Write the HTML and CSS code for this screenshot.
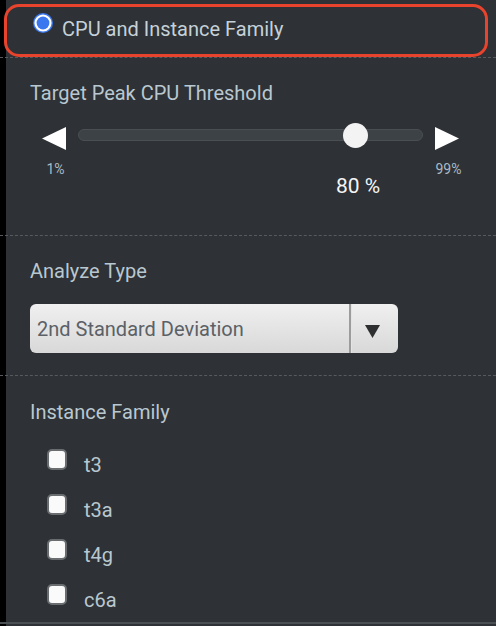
FILE: index.html
```html
<!DOCTYPE html>
<html>
<head>
<meta charset="utf-8">
<link rel="stylesheet" href="styles.css">
</head>
<body>
<div class="panel">
  <div class="header">
    <div class="highlight">
      <svg class="radio" width="20" height="20" viewBox="0 0 20 20">
        <circle cx="10" cy="10" r="10" fill="#3b78ef"/>
        <circle cx="10" cy="10" r="8.6" fill="#ffffff"/>
        <circle cx="10" cy="10" r="6.4" fill="#3b78ef"/>
      </svg>
      <span class="header-text">CPU and Instance Family</span>
    </div>
  </div>

  <div class="section section-slider">
    <div class="label">Target Peak CPU Threshold</div>
    <div class="slider">
      <svg class="arrow" width="24" height="23" viewBox="0 0 24 23"><polygon points="24,0 24,23 0,11.5" fill="#ffffff"/></svg>
      <div class="track"><div class="thumb"></div></div>
      <svg class="arrow" width="24" height="23" viewBox="0 0 24 23"><polygon points="0,0 0,23 24,11.5" fill="#ffffff"/></svg>
      <div class="scale">1%</div>
      <div class="value">80 %</div>
      <div class="scale">99%</div>
    </div>
  </div>

  <div class="section section-select">
    <div class="label">Analyze Type</div>
    <div class="select">
      <div class="select-text">2nd Standard Deviation</div>
      <div class="select-divider"></div>
      <div class="select-btn">
        <svg width="15" height="13" viewBox="0 0 15 13"><polygon points="0,0 15,0 7.5,13" fill="#2e2f30"/></svg>
      </div>
    </div>
  </div>

  <div class="section section-family">
    <div class="label">Instance Family</div>
    <div class="checks">
      <div class="check-row"><span class="box"></span><span class="check-label">t3</span></div>
      <div class="check-row"><span class="box"></span><span class="check-label">t3a</span></div>
      <div class="check-row"><span class="box"></span><span class="check-label">t4g</span></div>
      <div class="check-row"><span class="box"></span><span class="check-label">c6a</span></div>
    </div>
  </div>
</div>
</body>
</html>
```
FILE: styles.css
```css
html, body {
  margin: 0;
  padding: 0;
  background: #2e3135;
}
body {
  font-family: Roboto, "Liberation Sans", sans-serif;
}
.panel {
  width: 496px;
  height: 626px;
  background: #2e3135;
  box-shadow: inset 6px 0 0 #000;
  overflow: hidden;
  display: flex;
  flex-direction: column;
}
.header {
  height: 57px;
  border-bottom: 1px dashed #575b5f;
  box-sizing: content-box;
}
.highlight {
  box-sizing: border-box;
  margin: 4px 8px 0 4px;
  height: 53px;
  border: 3px solid #e8432c;
  border-radius: 15px;
  display: flex;
  align-items: flex-start;
  padding: 6px 0 0 26px;
  gap: 9px;
  position: relative;
}
.radio {
  display: block;
  flex: none;
}
.header-text {
  margin-top: 4px;
  font-size: 20px;
  line-height: 24px;
  color: #c5d1d8;
}
.section {
  padding-left: 30px;
  border-bottom: 1px dashed #575b5f;
}
.label {
  font-size: 20px;
  line-height: 24px;
  color: #b9c8d0;
}
.section-slider {
  padding-top: 23px;
  height: 154px;
}
.slider {
  margin-top: 19px;
  margin-left: 12px;
  display: grid;
  grid-template-columns: 24px 345px 24px;
  column-gap: 12px;
  align-items: start;
}
.arrow {
  display: block;
  margin-top: 3px;
}
.track {
  margin-top: 5px;
  height: 12px;
  box-sizing: border-box;
  border: 1px solid #4a4f53;
  background: #3d4246;
  border-radius: 6px;
  position: relative;
}
.thumb {
  position: absolute;
  left: 264px;
  top: -7px;
  width: 25px;
  height: 25px;
  border-radius: 50%;
  background: #f3f3f3;
}
.scale {
  margin-top: 11px;
  font-size: 14px;
  line-height: 16px;
  color: #a9bcc6;
  text-align: center;
  white-space: nowrap;
  margin-left: -4px;
  margin-right: -4px;
  padding-left: 3px;
}
.value {
  margin-top: 24px;
  font-size: 21px;
  line-height: 24px;
  color: #f5f5f5;
  padding-left: 258px;
  white-space: nowrap;
}
.section-select {
  padding-top: 23px;
  height: 116px;
}
.select {
  margin-top: 21px;
  width: 368px;
  height: 49px;
  border-radius: 6px;
  background: linear-gradient(#f0f0f0, #d8d8d8);
  display: flex;
  align-items: stretch;
  overflow: hidden;
}
.select-text {
  width: 312px;
  padding-left: 7px;
  display: flex;
  align-items: center;
  font-size: 20px;
  color: #5b6166;
  white-space: nowrap;
}
.select-divider {
  width: 2px;
  background: #9c9c9c;
  border-right: 1px solid #e4e4e4;
}
.select-btn {
  flex: 1;
  display: flex;
  align-items: center;
  padding-left: 13px;
  padding-top: 5px;
}
.select-btn svg {
  display: block;
}
.section-family {
  flex: 1;
  padding-top: 24px;
  padding-bottom: 10px;
  border-bottom: 2px solid #4a4f53;
  margin-bottom: 2px;
}
.checks {
  margin-top: 25px;
  margin-left: 17px;
  display: flex;
  flex-direction: column;
  gap: 17px;
}
.check-row {
  display: flex;
  align-items: flex-start;
  gap: 17px;
  height: 28px;
}
.box {
  width: 20px;
  height: 21px;
  box-sizing: border-box;
  border: 2px solid #6a6d70;
  border-radius: 5px;
  background: #fafafa;
  flex: none;
}
.check-label {
  margin-top: 4px;
  font-size: 20px;
  line-height: 24px;
  color: #b9c8d0;
}
```
